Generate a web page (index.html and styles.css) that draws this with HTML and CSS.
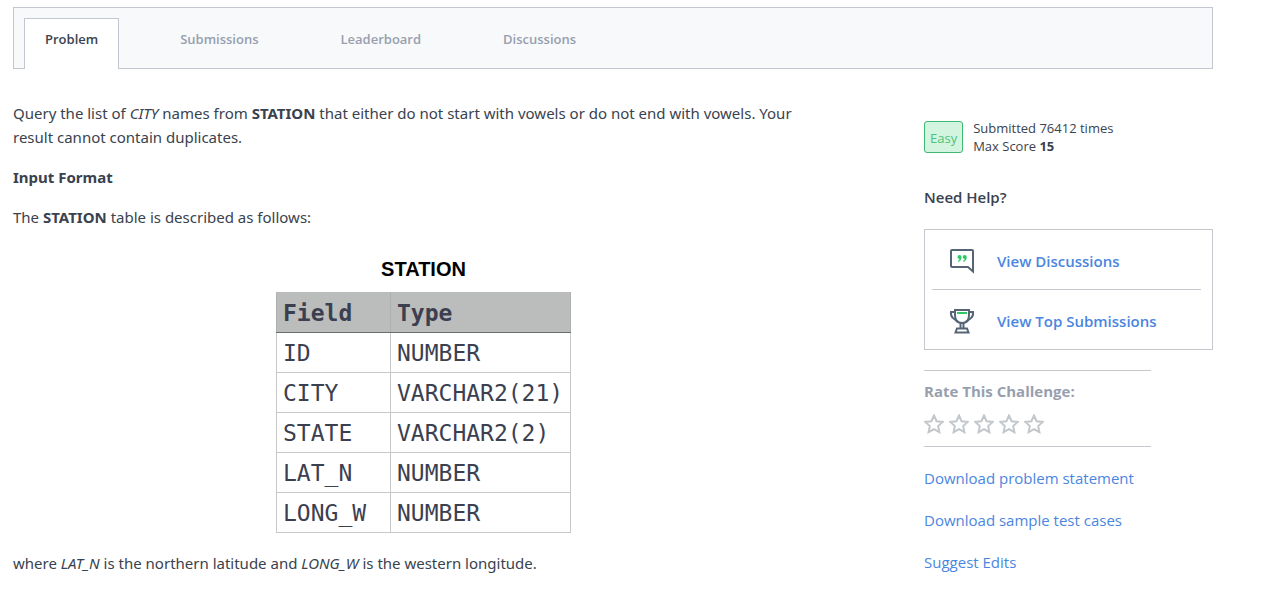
FILE: index.html
```html
<!DOCTYPE html>
<html lang="en">
<head>
<meta charset="utf-8">
<title>Problem</title>
<link rel="stylesheet" href="styles.css">
</head>
<body>
<div class="page">
  <nav class="tabs">
    <a class="tab tab-active" href="#problem">Problem</a>
    <a class="tab" href="#submissions">Submissions</a>
    <a class="tab" href="#leaderboard">Leaderboard</a>
    <a class="tab" href="#discussions">Discussions</a>
  </nav>
  <div class="columns">
    <main class="problem">
      <p>Query the list of <em>CITY</em> names from <strong>STATION</strong> that either do not start with vowels or do not end with vowels. Your result cannot contain duplicates.</p>
      <p><strong>Input Format</strong></p>
      <p>The <strong>STATION</strong> table is described as follows:</p>
      <table class="schema">
        <caption>STATION</caption>
        <thead><tr><th>Field</th><th>Type</th></tr></thead>
        <tbody>
          <tr><td>ID</td><td>NUMBER</td></tr>
          <tr><td>CITY</td><td>VARCHAR2(21)</td></tr>
          <tr><td>STATE</td><td>VARCHAR2(2)</td></tr>
          <tr><td>LAT_N</td><td>NUMBER</td></tr>
          <tr><td>LONG_W</td><td>NUMBER</td></tr>
        </tbody>
      </table>
      <p>where <em>LAT_N</em> is the northern latitude and <em>LONG_W</em> is the western longitude.</p>
    </main>
    <aside class="sidebar">
      <div class="stats">
        <span class="badge">Easy</span>
        <div class="stats-text">
          <div>Submitted 76412 times</div>
          <div>Max Score <b>15</b></div>
        </div>
      </div>
      <h2 class="help-title">Need Help?</h2>
      <div class="help">
        <a class="help-link" href="#discussions">
          <svg width="26" height="26" viewBox="0 0 26 26" fill="none" aria-hidden="true">
            <path d="M3 2H23Q24 2 24 3V23.500L19 19H3Q2 19 2 18V3Q2 2 3 2Z" stroke="#576475" stroke-width="2"/>
            <g fill="#2ec866"><circle cx="10.500" cy="9" r="2"/><path d="M12.500 9Q12.500 13 9 14V12.800Q10.700 12 10.800 10Z"/><circle cx="15.700" cy="9" r="2"/><path d="M17.700 9Q17.700 13 14.200 14V12.800Q15.900 12 16 10Z"/></g>
          </svg>
          <span>View Discussions</span>
        </a>
        <a class="help-link" href="#submissions">
          <svg width="26" height="26" viewBox="0 0 26 26" fill="none" aria-hidden="true">
            <g stroke="#576475" stroke-width="2">
              <path d="M6 2H20V7Q20 15 13 15Q6 15 6 7Z"/>
              <path d="M6 4H2Q1.500 8 4 10Q6 11.500 9 14M20 4H24Q24.500 8 22 10Q20 11.500 17 14"/>
              <path d="M11.500 15V20M14.500 15V20"/>
              <path d="M8 20.500H18L19.500 24.500H6.500Z"/>
            </g>
            <path d="M8 5H18" stroke="#2ec866" stroke-width="2"/>
          </svg>
          <span>View Top Submissions</span>
        </a>
      </div>
      <section class="rate">
        <h3>Rate This Challenge:</h3>
        <div class="stars">
          <button type="button" aria-label="1 star"><svg viewBox="0 0 20 20"><path d="M10 1.500L12.600 7.200L18.700 7.900L14.200 12.100L15.400 18.200L10 15.200L4.600 18.200L5.800 12.100L1.300 7.900L7.400 7.200Z"/></svg></button>
          <button type="button" aria-label="2 stars"><svg viewBox="0 0 20 20"><path d="M10 1.500L12.600 7.200L18.700 7.900L14.200 12.100L15.400 18.200L10 15.200L4.600 18.200L5.800 12.100L1.300 7.900L7.400 7.200Z"/></svg></button>
          <button type="button" aria-label="3 stars"><svg viewBox="0 0 20 20"><path d="M10 1.500L12.600 7.200L18.700 7.900L14.200 12.100L15.400 18.200L10 15.200L4.600 18.200L5.800 12.100L1.300 7.900L7.400 7.200Z"/></svg></button>
          <button type="button" aria-label="4 stars"><svg viewBox="0 0 20 20"><path d="M10 1.500L12.600 7.200L18.700 7.900L14.200 12.100L15.400 18.200L10 15.200L4.600 18.200L5.800 12.100L1.300 7.900L7.400 7.200Z"/></svg></button>
          <button type="button" aria-label="5 stars"><svg viewBox="0 0 20 20"><path d="M10 1.500L12.600 7.200L18.700 7.900L14.200 12.100L15.400 18.200L10 15.200L4.600 18.200L5.800 12.100L1.300 7.900L7.400 7.200Z"/></svg></button>
        </div>
      </section>
      <div class="links">
        <a href="#statement">Download problem statement</a>
        <a href="#cases">Download sample test cases</a>
        <a href="#edits">Suggest Edits</a>
      </div>
    </aside>
  </div>
</div>
</body>
</html>
```
FILE: styles.css
```css
* { box-sizing: border-box; }
body {
  margin: 0;
  background: #fff;
  color: #39424e;
  font: 15px/24px "Open Sans", "Noto Sans", sans-serif;
}
a { color: #4a86e0; text-decoration: none; }
.page { padding: 7px 62px 0 13px; }

.tabs {
  display: flex;
  gap: 40px;
  padding: 10px 10px 0;
  background: #f7f9fb;
  border: 1px solid #c2c7d0;
}
.tab {
  padding: 10px 20px 19px;
  border: 1px solid transparent;
  border-bottom: 0;
  color: #979faf;
  font-size: 13px;
  font-weight: 600;
  line-height: 20px;
}
.tab-active {
  margin-bottom: -1px;
  padding-bottom: 20px;
  background: #fff;
  border-color: #c2c7d0;
  color: #39424e;
}

.columns {
  display: grid;
  grid-template-columns: minmax(0, 1fr) 289px;
  gap: 90px;
}
.problem {
  padding-top: 32px;
  font-family: "Noto Sans", "Open Sans", sans-serif;
}
.problem p { margin: 0 0 16px; }
.schema {
  margin: 0 auto 18px;
  border-collapse: collapse;
  color: #3c3f50;
  font: 23px/32px "DejaVu Sans Mono", monospace;
}
.schema caption {
  padding: 8px 0 7px;
  color: #000;
  font: bold 20px/32px "Liberation Sans", sans-serif;
}
.schema th, .schema td {
  height: 40px;
  padding: 0 6px;
  border: 1px solid #c8c8c8;
  text-align: left;
}
.schema th {
  background: #babdbb;
  border-color: #babdbb #adb0ae #6b6d6c;
}
.schema th:first-child { width: 114px; }
.schema th:last-child { width: 180px; }

.sidebar { padding-top: 50px; }
.stats { display: flex; align-items: center; gap: 10px; }
.badge {
  padding: 5px 5px 3px;
  border: 1px solid #3fb871;
  border-radius: 3px;
  background: #d3f4df;
  color: #4bc47b;
  font-size: 13px;
  line-height: 22px;
}
.stats-text { font-size: 13px; line-height: 18px; }
.help-title { margin: 30px 0 20px; font-size: 15px; font-weight: 600; line-height: 24px; }
.help {
  padding: 0 11px 0 7px;
  border: 1px solid #c5c8cc;
}
.help-link {
  display: flex;
  align-items: center;
  gap: 22px;
  height: 59px;
  padding: 2px 17px 0;
  font-weight: 600;
}
.help-link + .help-link { border-top: 1px solid #c5c8cc; height: 60px; }
.rate {
  width: 227px;
  margin: 20px 0 19px;
  padding: 8px 0 11px;
  border: solid #c5c8cc;
  border-width: 1px 0;
}
.rate h3 { margin: 0 0 10px; color: #979faf; font-size: 15px; font-weight: 700; line-height: 24px; }
.stars { display: flex; gap: 5px; }
.stars button { width: 20px; height: 22px; padding: 0; border: 0; background: none; }
.stars svg { display: block; width: 20px; height: 20px; fill: none; stroke: #c2c7cb; stroke-width: 2; }
.links { display: flex; flex-direction: column; gap: 18px; }
```
